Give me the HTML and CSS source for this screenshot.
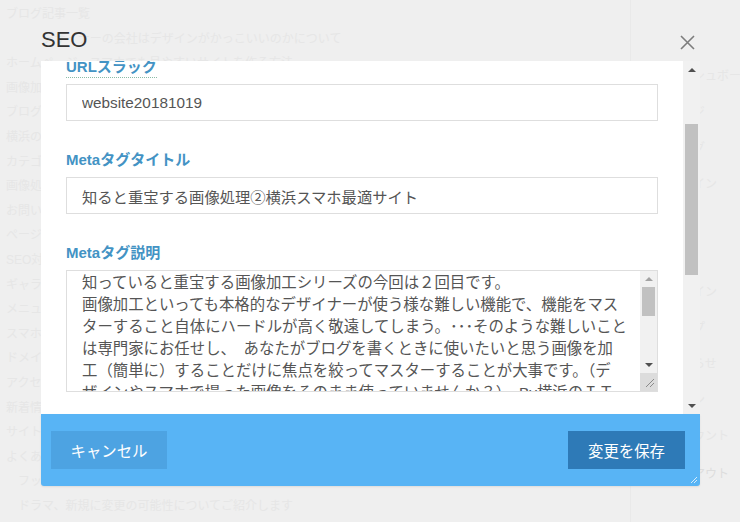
FILE: index.html
```html
<!DOCTYPE html>
<html lang="ja">
<head>
  <meta charset="UTF-8">
  <title>SEO設定</title>
  <link rel="stylesheet" href="styles.css">
</head>
<body>

  <!-- 背景のページ（オーバーレイで薄く見える） -->
  <div class="page">
    <div class="page-main">
      <p>ブログ記事一覧</p>
      <p>　　　デザイナーの会社はデザインがかっこいいのかについて</p>
      <p>ホームページ　スマホでも見やすいサイトを作る方法</p>
      <p>画像加工シリーズ　知っていると便利な機能まとめ</p>
      <p>ブログの書き方　初心者向けのポイントを紹介します</p>
      <p>横浜のIT企業がおすすめするスマホ最適化</p>
      <p>カテゴリー別の記事を表示しています</p>
      <p>画像処理の基本　サイズ変更とトリミング</p>
      <p>お問い合わせフォームの設置について</p>
      <p>ページの公開設定と予約投稿の使い方</p>
      <p>SEO対策　タイトルと説明文の書き方</p>
      <p>ギャラリーの作成と写真の並べ替え</p>
      <p>メニューの編集と表示順の変更</p>
      <p>スマホ表示の確認方法について</p>
      <p>ドメインの設定とSSLの有効化</p>
      <p>アクセス解析の見方を解説します</p>
      <p>新着情報の更新をお知らせします</p>
      <p>サイトのデザインを変更する方法</p>
      <p>よくある質問とその回答まとめ</p>
      <p>　フッターの編集と著作権表示について</p>
      <p>　ドラマ、新規に変更の可能性についてご紹介します</p>
    </div>
    <div class="page-side">
      <p>ダッシュボード</p>
      <p>ページ</p>
      <p>ブログ</p>
      <p>デザイン</p>
      <p>画像</p>
      <p>設定</p>
      <p>ドメイン</p>
      <p>ヘルプ</p>
      <p>お知らせ</p>
      <p>プラン</p>
      <p>アカウント</p>
      <p class="side-logout">ログアウト</p>
    </div>
  </div>

  <div class="modal">
    <div class="modal-head">
      <h2>SEO</h2>
      <button class="close-btn" title="閉じる">
        <svg width="15" height="15" viewBox="0 0 15 15">
          <path d="M1 1 L14 14 M14 1 L1 14" stroke="#7d7d7d" stroke-width="1.6" fill="none"/>
        </svg>
      </button>
    </div>

    <div class="modal-body">
      <div class="form">
        <div class="field">
          <label class="field-label"><span class="hint">URLスラック</span></label>
          <input class="input" type="text" value="website20181019">
        </div>
        <div class="field">
          <label class="field-label">Metaタグタイトル</label>
          <input class="input" type="text" value="知ると重宝する画像処理②横浜スマホ最適サイト">
        </div>
        <div class="field">
          <label class="field-label">Metaタグ説明</label>
          <div class="textarea">
            <div class="textarea-text">知っていると重宝する画像加工シリーズの今回は２回目です。<br>画像加工といっても本格的なデザイナーが使う様な難しい機能で、機能をマス<br>ターすること自体にハードルが高く敬遠してしまう。･･･そのような難しいこと<br>は専門家にお任せし、　あなたがブログを書くときに使いたいと思う画像を加<br>工（簡単に）することだけに焦点を絞ってマスターすることが大事です。（デ<br>ザインやスマホで撮った画像をそのまま使っていませんか？）　By横浜のＩＴ</div>
            <div class="mini-bar">
              <div class="mini-btn"><span class="arrow-up light"></span></div>
              <div class="mini-track"><div class="mini-thumb"></div></div>
              <div class="mini-btn"><span class="arrow-down"></span></div>
              <div class="mini-corner">
                <svg width="17" height="17" viewBox="0 0 17 17">
                  <path d="M14 6 L6 14 M14 10 L10 14" stroke="#8a8a8a" stroke-width="1" fill="none"/>
                </svg>
              </div>
            </div>
          </div>
        </div>
      </div>

      <div class="scrollbar">
        <div class="sb-btn"><span class="arrow-up"></span></div>
        <div class="sb-track"><div class="sb-thumb"></div></div>
        <div class="sb-btn"><span class="arrow-down"></span></div>
      </div>
    </div>

    <div class="modal-foot">
      <button class="btn btn-cancel">キャンセル</button>
      <button class="btn btn-save">変更を保存</button>
      <svg class="grip" width="9" height="9" viewBox="0 0 9 9">
        <path d="M8 2 L2 8 M8 5 L5 8" stroke="#d6ecfb" stroke-width="1" fill="none"/>
      </svg>
    </div>
  </div>

</body>
</html>
```

FILE: styles.css
```css
* {
  box-sizing: border-box;
}

body {
  margin: 0;
  width: 740px;
  height: 522px;
  overflow: hidden;
  position: relative;
  background: #efefef;
  font-family: "Liberation Sans", "Noto Sans CJK JP", sans-serif;
  color: #555;
}

/* 背景ページ */
.page {
  display: flex;
  height: 522px;
}

.page-main {
  flex: 1;
  padding: 2px 0 0 6px;
  font-size: 12px;
  color: #e6e6e6;
}

.page-main p {
  margin: 0;
  line-height: 24.6px;
  white-space: nowrap;
}

.page-side {
  width: 110px;
  border-left: 1px solid #e9e9e9;
  padding: 58px 0 0 38px;
  font-size: 12px;
  color: #e6e6e6;
}

.page-side p {
  margin: 0;
  line-height: 36px;
  white-space: nowrap;
}

.page-side .side-logout {
  margin-top: 2px;
  color: #dddddd;
}

/* モーダル */
.modal {
  position: absolute;
  left: 41px;
  top: 25px;
  width: 659px;
}

.modal-head {
  height: 36px;
  display: flex;
  justify-content: space-between;
  align-items: flex-start;
}

.modal-head h2 {
  margin: 0;
  padding-top: 2px;
  font-size: 22px;
  line-height: 26px;
  font-weight: normal;
  color: #333;
}

.close-btn {
  background: none;
  border: none;
  padding: 0;
  margin: 10px 5px 0 0;
  width: 15px;
  height: 15px;
  cursor: pointer;
}

.close-btn svg {
  display: block;
}

.modal-body {
  display: flex;
  height: 353px;
  background: #fff;
  overflow: hidden;
}

.form {
  flex: 1;
  padding: 0 25px;
  margin-top: -3px;
}

.field {
  margin-bottom: 30px;
}

.field-label {
  display: block;
  height: 17px;
  line-height: 17px;
  margin-bottom: 9px;
  font-size: 15px;
  font-weight: bold;
  color: #4393c4;
}

.hint {
  display: inline-block;
  padding-bottom: 2px;
  border-bottom: 1px dotted #8bbba6;
}

.input {
  display: block;
  width: 100%;
  height: 37px;
  margin: 0;
  padding: 0 15px;
  border: 1px solid #dedede;
  border-radius: 0;
  font-family: "Liberation Sans", "Noto Sans CJK JP", sans-serif;
  font-size: 15.3px;
  color: #555;
  background: #fff;
  outline: none;
}

.textarea {
  display: flex;
  height: 122px;
  border: 1px solid #dedede;
  overflow: hidden;
}

.textarea-text {
  flex: 1;
  padding: 1px 0 0 15px;
  font-size: 15.4px;
  line-height: 22px;
  white-space: nowrap;
  overflow: hidden;
  color: #555;
}

/* テキストエリアのスクロールバー */
.mini-bar {
  width: 17px;
  display: flex;
  flex-direction: column;
  background: #f1f1f1;
}

.mini-btn {
  height: 16px;
  display: flex;
  align-items: center;
  justify-content: center;
}

.mini-track {
  flex: 1;
  padding: 0 2px;
}

.mini-thumb {
  height: 29px;
  background: #c1c1c1;
}

.mini-corner {
  height: 18px;
  background: #dcdcdc;
}

.mini-corner svg {
  display: block;
}

/* モーダルのスクロールバー */
.scrollbar {
  width: 17px;
  display: flex;
  flex-direction: column;
  background: #f1f1f1;
}

.sb-btn {
  height: 17px;
  display: flex;
  align-items: center;
  justify-content: center;
}

.sb-track {
  flex: 1;
  padding: 46px 2px 0;
}

.sb-thumb {
  height: 151px;
  background: #c1c1c1;
}

.arrow-up,
.arrow-down {
  width: 0;
  height: 0;
  border-left: 4px solid transparent;
  border-right: 4px solid transparent;
}

.arrow-up {
  border-bottom: 4px solid #505050;
}

.arrow-up.light {
  border-bottom-color: #a3a3a3;
}

.arrow-down {
  border-top: 4px solid #505050;
}

/* フッター */
.modal-foot {
  position: relative;
  height: 72px;
  display: flex;
  justify-content: space-between;
  align-items: flex-start;
  padding: 17px 15px 0 10px;
  background: #58b4f5;
  border-radius: 0 0 3px 3px;
  box-shadow: 0 1px 2px rgba(0, 0, 0, 0.08);
}

.btn {
  height: 38px;
  width: 116px;
  border: none;
  border-radius: 0;
  font-family: "Liberation Sans", "Noto Sans CJK JP", sans-serif;
  font-size: 15.4px;
  color: #fff;
  cursor: pointer;
}

.btn-cancel {
  background: #4da3e2;
}

.btn-save {
  width: 117px;
  background: #2e7ab7;
}

.grip {
  position: absolute;
  right: 2px;
  bottom: 2px;
}
```
